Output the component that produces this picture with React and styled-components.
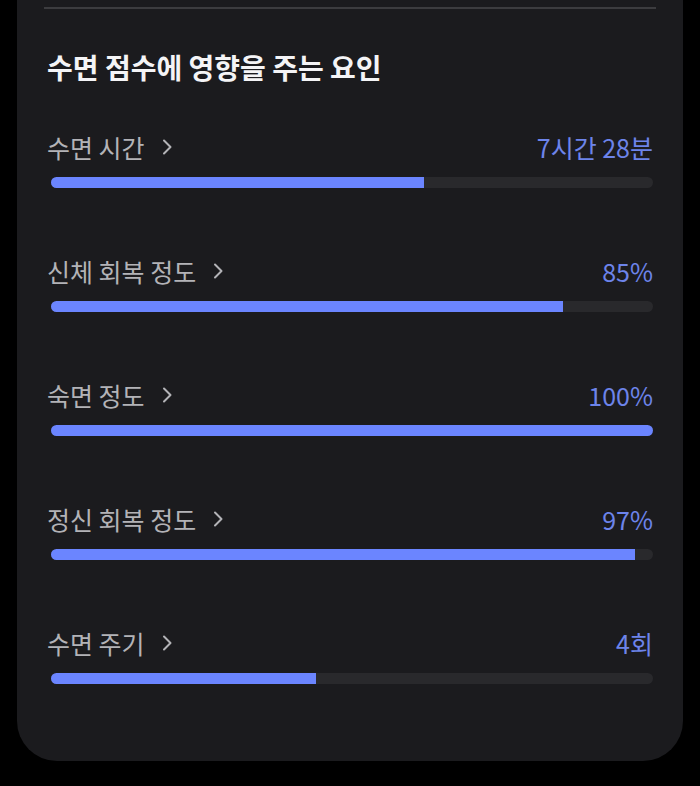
import styled, { createGlobalStyle } from 'styled-components';

const GlobalStyle = createGlobalStyle`
  html, body {
    margin: 0;
    padding: 0;
    background: #000;
  }
  body {
    font-family: "Noto Sans CJK KR", "Noto Sans", sans-serif;
  }
`;

const factors = [
  { label: '수면 시간', value: '7시간 28분', percent: 62 },
  { label: '신체 회복 정도', value: '85%', percent: 85 },
  { label: '숙면 정도', value: '100%', percent: 100 },
  { label: '정신 회복 정도', value: '97%', percent: 97 },
  { label: '수면 주기', value: '4회', percent: 44 },
];

const Page = styled.div`
  width: 700px;
  height: 786px;
  overflow: hidden;
  background: #000;
`;

const Card = styled.section`
  margin: 0 17px;
  padding: 7px 27px 77px;
  background: #1b1b1e;
  border-radius: 0 0 40px 40px;
`;

const Divider = styled.div`
  height: 2px;
  background: #3c3c3f;
`;

const Content = styled.div`
  padding: 0 3px;
`;

const Title = styled.h2`
  margin: 39px 0 44px;
  font-size: 28px;
  line-height: 38px;
  font-weight: 700;
  letter-spacing: 0;
  color: #f4f4f6;
`;

const List = styled.div`
  display: flex;
  flex-direction: column;
  gap: 66px;
`;

const Row = styled.div`
  display: flex;
  flex-direction: column;
  gap: 13px;
`;

const RowHead = styled.div`
  display: flex;
  align-items: center;
  justify-content: space-between;
  height: 34px;
`;

const Label = styled.span`
  display: flex;
  align-items: center;
  gap: 17px;
  font-size: 25px;
  line-height: 34px;
  color: #b3b3b7;
`;

const Value = styled.span`
  font-size: 25px;
  line-height: 34px;
  color: #6d84ea;
`;

const Track = styled.div`
  height: 11px;
  margin-left: 4px;
  border-radius: 6px;
  background: #29292c;
  overflow: hidden;
`;

const Fill = styled.div`
  height: 100%;
  background: #6b85ff;
`;

const Chevron = () => (
  <svg width="11" height="16" viewBox="0 0 11 16" fill="none">
    <path d="M2 1.5 L8.5 8 L2 14.5" stroke="#b3b3b7" strokeWidth="2" strokeLinecap="round" strokeLinejoin="round" />
  </svg>
);

export default function App() {
  return (
    <Page>
      <GlobalStyle />
      <Card>
        <Divider />
        <Content>
          <Title>수면 점수에 영향을 주는 요인</Title>
          <List>
            {factors.map(f => (
              <Row key={f.label}>
                <RowHead>
                  <Label>
                    {f.label}
                    <Chevron />
                  </Label>
                  <Value>{f.value}</Value>
                </RowHead>
                <Track>
                  <Fill style={{ width: `${f.percent}%` }} />
                </Track>
              </Row>
            ))}
          </List>
        </Content>
      </Card>
    </Page>
  );
}
